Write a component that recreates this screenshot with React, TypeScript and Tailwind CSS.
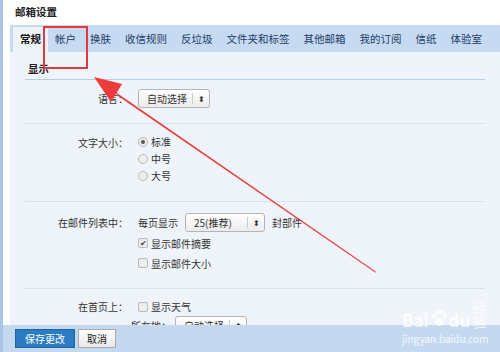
import React from "react";

const tabs = ["常规", "帐户", "换肤", "收信规则", "反垃圾", "文件夹和标签", "其他邮箱", "我的订阅", "信纸", "体验室"];

const Select = ({ label, width }: { label: string; width: string }) => (
  <div
    className={`flex items-center h-[19px] ${width} border border-[#b5b5b5] rounded-[3px] bg-gradient-to-b from-white to-[#ececec] text-[10px] leading-none text-[#333]`}
  >
    <span className="flex-1 pl-[8px] whitespace-nowrap">{label}</span>
    <span className="w-px h-[11px] bg-[#ccc]" />
    <span className="w-[16px] text-center text-[8px] leading-none">⬍</span>
  </div>
);

const Radio = ({ checked }: { checked?: boolean }) => (
  <span className="w-[10px] h-[10px] rounded-full border border-[#b9b9b9] bg-[#eee] flex items-center justify-center">
    {checked && <span className="w-[4px] h-[4px] rounded-full bg-[#555]" />}
  </span>
);

const Check = ({ checked }: { checked?: boolean }) => (
  <span className="w-[10px] h-[10px] rounded-[2px] border border-[#b9b9b9] bg-[#eee] flex items-center justify-center text-[8px] leading-none text-[#444]">
    {checked ? "✔" : ""}
  </span>
);

const Row = ({ label, children, className = "" }: { label: string; children: React.ReactNode; className?: string }) => (
  <div className={`flex ${className}`}>
    <div className="w-[113px] text-right text-[10px] text-[#333] pr-[10px] leading-[19px] whitespace-nowrap">{label}</div>
    <div className="flex flex-col">{children}</div>
  </div>
);

export default function App() {
  return (
    <div
      className="relative w-[500px] h-[352px] overflow-hidden bg-white flex"
      style={{ fontFamily: '"Noto Sans CJK SC", "Noto Sans", sans-serif' }}
    >
      <div className="w-[3px] bg-[#a9c6ea] shrink-0" />
      <div className="flex-1 flex flex-col min-w-0">
        <div className="h-[25px] shrink-0 pl-[12px] flex items-center text-[10.5px] leading-none font-bold text-[#222]">
          邮箱设置
        </div>
        <div className="flex-1 flex flex-col pl-[7px] min-h-0">
          <div className="h-[27px] shrink-0 bg-[#c6daf1] flex items-end pl-[3px]">
            {tabs.map((t, i) => (
              <div
                key={t}
                className={`h-[25px] flex items-center whitespace-nowrap text-[10.5px] leading-none px-[7px] ${
                  i === 0 ? "bg-[#eff4fa] text-[#111] font-bold" : "text-[#1d3a66]"
                }`}
              >
                {t}
              </div>
            ))}
          </div>
          <div className="flex-1 bg-[#eff4fa] flex flex-col px-[15px] overflow-hidden">
            <div className="h-[28px] shrink-0 flex items-center pt-[8px] pl-[3px] border-b border-[#b8cde8] text-[10.5px] leading-none font-bold text-[#222]">
              显示
            </div>
            <Row label="语言：" className="pt-[9px] pb-[15px] border-b border-[#d9e2ec]">
              <Select label="自动选择" width="w-[72px]" />
            </Row>
            <Row label="文字大小：" className="pt-[9px] pb-[17px] border-b border-[#d9e2ec]">
              {["标准", "中号", "大号"].map((s, i) => (
                <div key={s} className="flex items-center gap-[3px] h-[17px] text-[10px] text-[#333]">
                  <Radio checked={i === 0} />
                  {s}
                </div>
              ))}
            </Row>
            <Row label="在邮件列表中：" className="pt-[11px] pb-[15px] border-b border-[#d9e2ec]">
              <div className="flex items-center gap-[7px] h-[19px] text-[10px] text-[#333]">
                每页显示
                <Select label="25(推荐)" width="w-[80px]" />
                封部件
              </div>
              <div className="flex items-center gap-[3px] h-[20px] mt-[1px] text-[10px] text-[#333]">
                <Check checked />
                显示邮件摘要
              </div>
              <div className="flex items-center gap-[3px] h-[20px] text-[10px] text-[#333]">
                <Check />
                显示邮件大小
              </div>
            </Row>
            <Row label="在首页上：" className="pt-[8px]">
              <div className="flex items-center gap-[3px] h-[19px] text-[10px] text-[#333]">
                <Check />
                显示天气
              </div>
              <div className="flex items-center gap-[4px] h-[19px] -ml-[7px] text-[10px] text-[#333]">
                所在地：
                <Select label="自动选择" width="w-[72px]" />
              </div>
            </Row>
          </div>
        </div>
        <div className="h-[27px] bg-[#c4d9f0] flex items-center pl-[12px] gap-[3px] shrink-0">
          <button className="h-[19px] px-[9px] flex items-center bg-[#2b7cc2] border border-[#1e64a3] text-white text-[10px] leading-none">
            保存更改
          </button>
          <button className="h-[19px] px-[8px] flex items-center bg-gradient-to-b from-white to-[#e8e8e8] border border-[#aaa] text-[#222] text-[10px] leading-none">
            取消
          </button>
        </div>
      </div>

      {/* annotation overlay */}
      <div className="absolute left-[43px] top-[26px] w-[45px] h-[43px] border-2 border-[#e0393d]" />
      <svg className="absolute left-0 top-0" width="500" height="352">
        <polygon points="94,77 122,84 111,102" fill="#ec3b3a" />
        <polygon points="114,91 118,96 376,273 375,271" fill="#ec3b3a" />
      </svg>

      {/* watermark */}
      <div className="absolute left-[402px] top-[300px] flex flex-col items-start text-white/80 leading-none">
        <div className="flex items-end text-[17px] font-bold leading-none">
          <span>Bai</span>
          <svg width="18" height="18" viewBox="0 0 18 18" className="mx-[1px] mb-[1px]">
            <g fill="rgba(255,255,255,0.85)">
              <ellipse cx="4" cy="7" rx="2" ry="2.5" />
              <ellipse cx="7.5" cy="3.5" rx="2" ry="2.5" />
              <ellipse cx="11.5" cy="3.5" rx="2" ry="2.5" />
              <ellipse cx="15" cy="7" rx="2" ry="2.5" />
              <ellipse cx="9.5" cy="13" rx="4.5" ry="4" />
            </g>
          </svg>
          <span>du</span>
          <span className="text-[14px] font-normal ml-[2px]">经验</span>
        </div>
        <div className="text-[10px] mt-[6px] leading-none">jingyan.baidu.com</div>
      </div>
    </div>
  );
}
